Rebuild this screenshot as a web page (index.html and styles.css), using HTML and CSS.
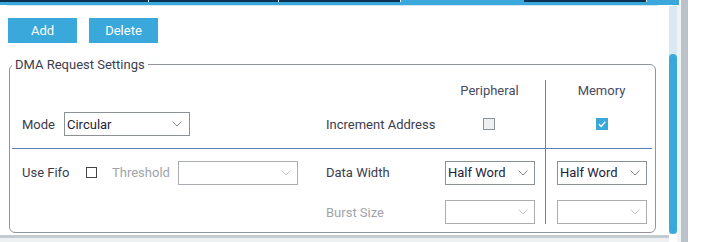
FILE: index.html
```html
<!DOCTYPE html>
<html lang="en">
<head>
    <meta charset="UTF-8">
    <meta name="viewport" content="width=device-width, initial-scale=1.0">
    <title>DMA Settings</title>
    <link rel="stylesheet" href="styles.css">
</head>
<body>
    <div class="app">
        <div class="tabs">
            <div class="tab dark" style="width: 149px"></div>
            <div class="tab dark" style="width: 130px"></div>
            <div class="tab dark" style="width: 122px"></div>
            <div class="tab active" style="width: 123px"></div>
            <div class="tab dark" style="width: 123px"></div>
        </div>
        <div class="main">
            <div class="panel">
                <div class="tabline"></div>
                <div class="actions">
                    <button class="btn">Add</button>
                    <button class="btn">Delete</button>
                </div>
                <fieldset class="group">
                    <legend>DMA Request Settings</legend>
                    <div class="dma">
                        <div class="cell"></div>
                        <div class="cell"></div>
                        <div class="cell col-per"><span class="head">Peripheral</span></div>
                        <div class="cell col-mem"><span class="head">Memory</span></div>

                        <div class="cell row1 left">
                            <span class="label mode-label">Mode</span>
                            <div class="select w-mode"><span>Circular</span>
                                <svg width="10" height="6" viewBox="0 0 10 6"><path d="M0.5 0.5 L5 5 L9.5 0.5" fill="none" stroke="#8a8f95"/></svg>
                            </div>
                        </div>
                        <div class="cell row1 mid"><span class="label">Increment Address</span></div>
                        <div class="cell row1 col-per"><span class="check"></span></div>
                        <div class="cell row1 col-mem">
                            <span class="check on">
                                <svg width="12" height="12" viewBox="0 0 12 12"><path d="M3 6.2 L5.2 8.4 L9.2 3.8" fill="none" stroke="#fff" stroke-width="1.4"/></svg>
                            </span>
                        </div>

                        <div class="cell left">
                            <span class="label fifo-label">Use Fifo</span>
                            <span class="check plain"></span>
                            <span class="label muted thr-label">Threshold</span>
                            <div class="select off w-thr"><span></span>
                                <svg width="10" height="6" viewBox="0 0 10 6"><path d="M0.5 0.5 L5 5 L9.5 0.5" fill="none" stroke="#c4c8cc"/></svg>
                            </div>
                        </div>
                        <div class="cell mid"><span class="label">Data Width</span></div>
                        <div class="cell col-per">
                            <div class="select w-col"><span>Half Word</span>
                                <svg width="10" height="6" viewBox="0 0 10 6"><path d="M0.5 0.5 L5 5 L9.5 0.5" fill="none" stroke="#8a8f95"/></svg>
                            </div>
                        </div>
                        <div class="cell col-mem">
                            <div class="select w-col"><span>Half Word</span>
                                <svg width="10" height="6" viewBox="0 0 10 6"><path d="M0.5 0.5 L5 5 L9.5 0.5" fill="none" stroke="#8a8f95"/></svg>
                            </div>
                        </div>

                        <div class="cell row3"></div>
                        <div class="cell row3 mid"><span class="label muted">Burst Size</span></div>
                        <div class="cell row3 col-per">
                            <div class="select off w-col"><span></span>
                                <svg width="10" height="6" viewBox="0 0 10 6"><path d="M0.5 0.5 L5 5 L9.5 0.5" fill="none" stroke="#c4c8cc"/></svg>
                            </div>
                        </div>
                        <div class="cell row3 col-mem">
                            <div class="select off w-col"><span></span>
                                <svg width="10" height="6" viewBox="0 0 10 6"><path d="M0.5 0.5 L5 5 L9.5 0.5" fill="none" stroke="#c4c8cc"/></svg>
                            </div>
                        </div>
                    </div>
                </fieldset>
                <div class="bottom"></div>
            </div>
            <div class="track"><div class="thumb"></div></div>
            <div class="gutter"></div>
        </div>
    </div>
    <div class="edge"></div>
</body>
</html>
```

FILE: styles.css
```css
body { margin: 0; display: flex; height: 242px; overflow: hidden; background: #fff; font-family: Roboto, "Liberation Sans", Arial, sans-serif; font-size: 13px; color: #3c3c4c; }
.app { width: 681px; display: flex; flex-direction: column; }
.edge { width: 7px; background: #b9c3c9; }

/* tab strip */
.tabs { width: 679px; height: 5px; background: #3aa8db; display: flex; align-items: flex-start; }
.tab { height: 2px; box-sizing: border-box; }
.tab.dark { background: #0c3352; border-right: 1px solid #e6eef4; }
.tab.active { background: transparent; }

.main { flex: 1; display: flex; }
.panel { width: 669px; display: flex; flex-direction: column; }
.tabline { height: 1px; width: 651px; margin-left: 7px; background: #d3e7f5; }
.track { width: 8px; height: 228px; margin-top: 1px; background: #dae8f4; display: flex; flex-direction: column; }
.thumb { margin-top: 48px; flex: 1; background: #3aa8db; border-radius: 4px; }
.gutter { width: 4px; background: #f0f2f4; }
.bottom { margin-top: auto; height: 7px; background: linear-gradient(#c4ccd0 0, #c4ccd0 3px, #eef1f2 3px); }

/* buttons */
.actions { display: flex; gap: 12px; padding-left: 8px; margin-top: 12px; }
.btn { width: 69px; height: 25px; border: none; background: #3aa8db; color: #fff; font-family: inherit; font-size: 13px; padding: 0; cursor: pointer; }
.btn:hover { background: #2a93c4; }

/* group box */
.group { margin: 14px 0 0 9px; width: 647px; box-sizing: border-box; padding: 0 3px 8px 2px; border: 1px solid #8e959b; border-radius: 6px; }
.group legend { padding: 0 3px; line-height: 15px; color: #3c3c4c; }
.dma { margin-top: 8px; display: grid; grid-template-columns: 308px 125px 100px 107px; grid-template-rows: 20px 49px 47px 28px; }
.cell { display: flex; align-items: center; box-sizing: border-box; }
.row1 { border-bottom: 1px solid #5f80c0; }
.row3 { padding-top: 4px; }
.left { padding-left: 10px; }
.mid { padding-left: 6px; }
.col-per > * { flex: none; }
.col-per .head, .col-per .check { margin: 0 auto 0 0; }
.col-per .head { width: 89px; text-align: center; }
.col-per .check { margin-left: 38px; }
.col-mem { border-left: 1px solid #5f80c0; padding-left: 11px; }
.col-mem .head { width: 89px; text-align: center; }
.col-mem .check { margin-left: 39px; }
.head { color: #4a4a5e; }

.label { white-space: nowrap; }
.muted { color: #a0a4aa; }
.mode-label { width: 42px; }
.fifo-label { width: 64px; }
.thr-label { width: 66px; }

/* checkboxes */
.check { width: 12px; height: 12px; box-sizing: border-box; border: 1px solid #8c9196; background: #eef0f3; display: block; }
.check.on { border: none; background: #3aa8db; }
.check.on svg { display: block; }
.check.plain { width: 11px; height: 11px; border-color: #444; background: #fff; margin-right: 15px; }

/* drop downs */
.select { height: 24px; box-sizing: border-box; border: 1px solid #8c9196; background: #fff; display: flex; align-items: center; justify-content: space-between; padding: 0 6px 0 2px; color: #1e1e3a; }
.select.off { border-color: #a9adb1; }
.select svg { flex: none; }
.w-mode { width: 126px; padding-right: 7px; }
.w-thr { width: 120px; }
.w-col { width: 90px; }
```
